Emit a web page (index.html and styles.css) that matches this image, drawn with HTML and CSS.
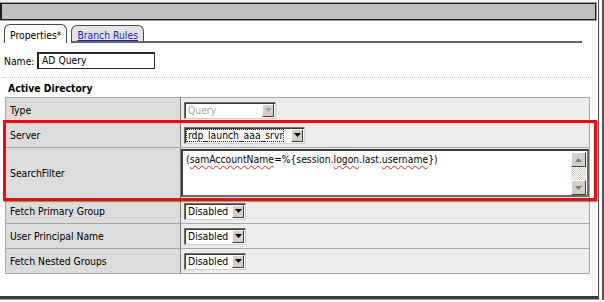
FILE: index.html
```html
<!DOCTYPE html>
<html lang="en">
<head>
  <meta charset="UTF-8">
  <title>AD Query - Properties</title>
  <link rel="stylesheet" href="styles.css">
</head>
<body>
  <div class="frame">
    <div class="window">
      <div class="ruler"></div>
      <div class="titlebar"></div>

      <div class="tabs">
        <div class="tab active">Properties*</div>
        <div class="tab"><a href="#">Branch Rules</a></div>
        <div class="tab-rest"></div>
      </div>

      <div class="name-row">
        <label>Name:</label>
        <div class="field">AD Query</div>
      </div>
      <div class="sep"></div>

      <div class="section-title">Active Directory</div>
      <table class="props">
        <colgroup><col class="col-label"><col></colgroup>
        <tr>
          <td class="label">Type</td>
          <td class="value">
            <span class="select disabled" style="width:92px"><span class="select-text">Query</span><span class="select-btn"><svg width="7" height="4" viewBox="0 0 7 4"><path d="M0 0h7L3.5 4z"/></svg></span></span>
          </td>
        </tr>
        <tr>
          <td class="label">Server</td>
          <td class="value">
            <span class="select" style="width:121px"><span class="select-text focus">rdp_launch_aaa_srvr</span><span class="select-btn"><svg width="7" height="4" viewBox="0 0 7 4"><path d="M0 0h7L3.5 4z"/></svg></span></span>
          </td>
        </tr>
        <tr class="tall">
          <td class="label">SearchFilter</td>
          <td class="value flush">
            <div class="textarea">
              <div class="textarea-text">(<span class="typo">samAccountName</span>=%{session.<span class="typo">logon</span>.last.<span class="typo">username</span>})</div>
              <div class="scrollbar">
                <span class="scroll-btn"><svg width="7" height="4" viewBox="0 0 7 4"><path d="M3.5 0L7 4H0z"/></svg></span>
                <span class="scroll-track"></span>
                <span class="scroll-btn"><svg width="7" height="4" viewBox="0 0 7 4"><path d="M0 0h7L3.5 4z"/></svg></span>
              </div>
            </div>
          </td>
        </tr>
        <tr>
          <td class="label">Fetch Primary Group</td>
          <td class="value">
            <span class="select" style="width:62px"><span class="select-text">Disabled</span><span class="select-btn"><svg width="7" height="4" viewBox="0 0 7 4"><path d="M0 0h7L3.5 4z"/></svg></span></span>
          </td>
        </tr>
        <tr>
          <td class="label">User Principal Name</td>
          <td class="value">
            <span class="select" style="width:62px"><span class="select-text">Disabled</span><span class="select-btn"><svg width="7" height="4" viewBox="0 0 7 4"><path d="M0 0h7L3.5 4z"/></svg></span></span>
          </td>
        </tr>
        <tr>
          <td class="label">Fetch Nested Groups</td>
          <td class="value">
            <span class="select" style="width:62px"><span class="select-text">Disabled</span><span class="select-btn"><svg width="7" height="4" viewBox="0 0 7 4"><path d="M0 0h7L3.5 4z"/></svg></span></span>
          </td>
        </tr>
      </table>

      <div class="highlight"></div>
    </div>
  </div>
</body>
</html>
```

FILE: styles.css
```css
body {
  margin: 0;
  padding: 0;
  background: #fff;
  font-family: "DejaVu Sans Condensed", "DejaVu Sans", sans-serif;
  font-size: 10.3px;
  color: #000;
}
.frame {
  width: 604px;
  height: 300px;
  box-sizing: border-box;
  padding-right: 3px;
  border-right: 2px solid #555;
}
.window {
  position: relative;
  height: 299px;
  box-sizing: border-box;
  border-right: 1px solid #555;
  border-bottom: 3px solid #3c3c3c;
  box-shadow: 0 1px 1px #999;
  overflow: hidden;
}
.ruler {
  height: 3px;
  background: #f2f2f2;
}
.titlebar {
  height: 17px;
  box-sizing: border-box;
  margin-right: 2px;
  background: #c0c0c0;
  border: 1px solid #1c1c1c;
  border-left-width: 2px;
  box-shadow: 0 0 0 1px #9a9a9a;
}
.tabs {
  display: flex;
  align-items: flex-end;
  gap: 4px;
  height: 19px;
  margin-top: 4px;
  padding-left: 4px;
}
.tab {
  height: 18px;
  box-sizing: border-box;
  padding: 2px 5px 0 5px;
  border: 1px solid #4a4a4a;
  border-bottom: 2px solid #666;
  border-radius: 6px 6px 0 0;
  background: #e4e4e4;
  line-height: 14px;
}
.tab a {
  color: #1a1acc;
  text-decoration: underline;
}
.tab.active {
  height: 19px;
  padding-top: 3px;
  background: #fff;
  border-bottom: none;
}
.tab-rest {
  width: 438px;
  margin-left: -4px;
  border-bottom: 2px solid #666;
}
.name-row {
  display: flex;
  align-items: center;
  height: 17px;
  margin-top: 9px;
  padding-left: 4px;
}
.name-row label {
  width: 33px;
}
.field {
  width: 118px;
  height: 17px;
  box-sizing: border-box;
  padding-left: 3px;
  border: 1px solid #2a2a2a;
  border-top-width: 2px;
  border-left-width: 2px;
  line-height: 13px;
}
.sep {
  margin: 8px 7px 0 3px;
  border-top: 1px dotted #c4c4c4;
}
.section-title {
  margin-top: 4px;
  padding-left: 8px;
  font-weight: bold;
  line-height: 12px;
}
.props {
  margin: 3px 0 0 5px;
  width: 585px;
  border-collapse: collapse;
  table-layout: fixed;
}
.col-label {
  width: 175px;
}
.props td {
  height: 24px;
  padding: 0;
  border: 1px solid #a8a8a8;
  vertical-align: middle;
}
.props tr.tall td {
  height: 50px;
}
.label {
  padding-left: 4px !important;
  background: #dcdcdc;
  border-right: 1px solid #7c7c7c !important;
}
.value {
  padding-left: 3px !important;
  background: #ececec;
}
.value.flush {
  padding: 0 !important;
  vertical-align: top;
}
.select {
  display: flex;
  align-items: center;
  height: 17px;
  box-sizing: border-box;
  background: #fff;
  border: 1px solid #d0d0d0;
  border-top-color: #707070;
  border-left-color: #707070;
  box-shadow: inset 1px 1px 0 #3a3a3a;
}
.select-text {
  padding: 0 1px 0 2px;
  margin-left: 1px;
  line-height: 13px;
  white-space: nowrap;
}
.select-text.focus {
  outline: 1px dotted #222;
  outline-offset: -1px;
}
.select-btn {
  display: flex;
  align-items: center;
  justify-content: center;
  width: 12px;
  height: 13px;
  box-sizing: border-box;
  margin-left: auto;
  margin-right: 1px;
  background: #d4d0c8;
  border: 1px solid;
  border-color: #fff #404040 #404040 #fff;
}
.select-btn svg {
  fill: #000;
}
.select.disabled .select-text {
  color: #a4a4a4;
}
.select.disabled .select-btn svg {
  fill: #a0a0a0;
}
.textarea {
  display: flex;
  height: 48px;
  margin-top: 1px;
  box-sizing: border-box;
  background: #fff;
  border: 2px solid #3c3c3c;
  border-right-color: #6a6a6a;
  border-bottom-color: #6a6a6a;
}
.textarea-text {
  flex: 1;
  padding: 2px 0 0 3px;
  line-height: 13px;
}
.typo {
  text-decoration: underline wavy #e02020;
  text-decoration-thickness: 1px;
  text-underline-offset: 2px;
}
.scrollbar {
  display: flex;
  flex-direction: column;
  width: 15px;
  margin: 1px 1px 0 0;
}
.scroll-btn {
  display: flex;
  align-items: center;
  justify-content: center;
  height: 15px;
  box-sizing: border-box;
  background: #d4d0c8;
  border: 1px solid;
  border-color: #fff #404040 #404040 #fff;
}
.scroll-btn svg {
  fill: #7a7a7a;
}
.scroll-track {
  flex: 1;
  background: repeating-conic-gradient(#fff 0 25%, #d4d0c8 0 50%) 0 0 / 2px 2px;
}
.highlight {
  position: absolute;
  left: 3px;
  top: 120px;
  width: 594px;
  height: 81px;
  box-sizing: border-box;
  border: 3px solid #ec0a0a;
  box-shadow: 1px 1px 1px rgba(0, 0, 0, 0.35);
}
```
